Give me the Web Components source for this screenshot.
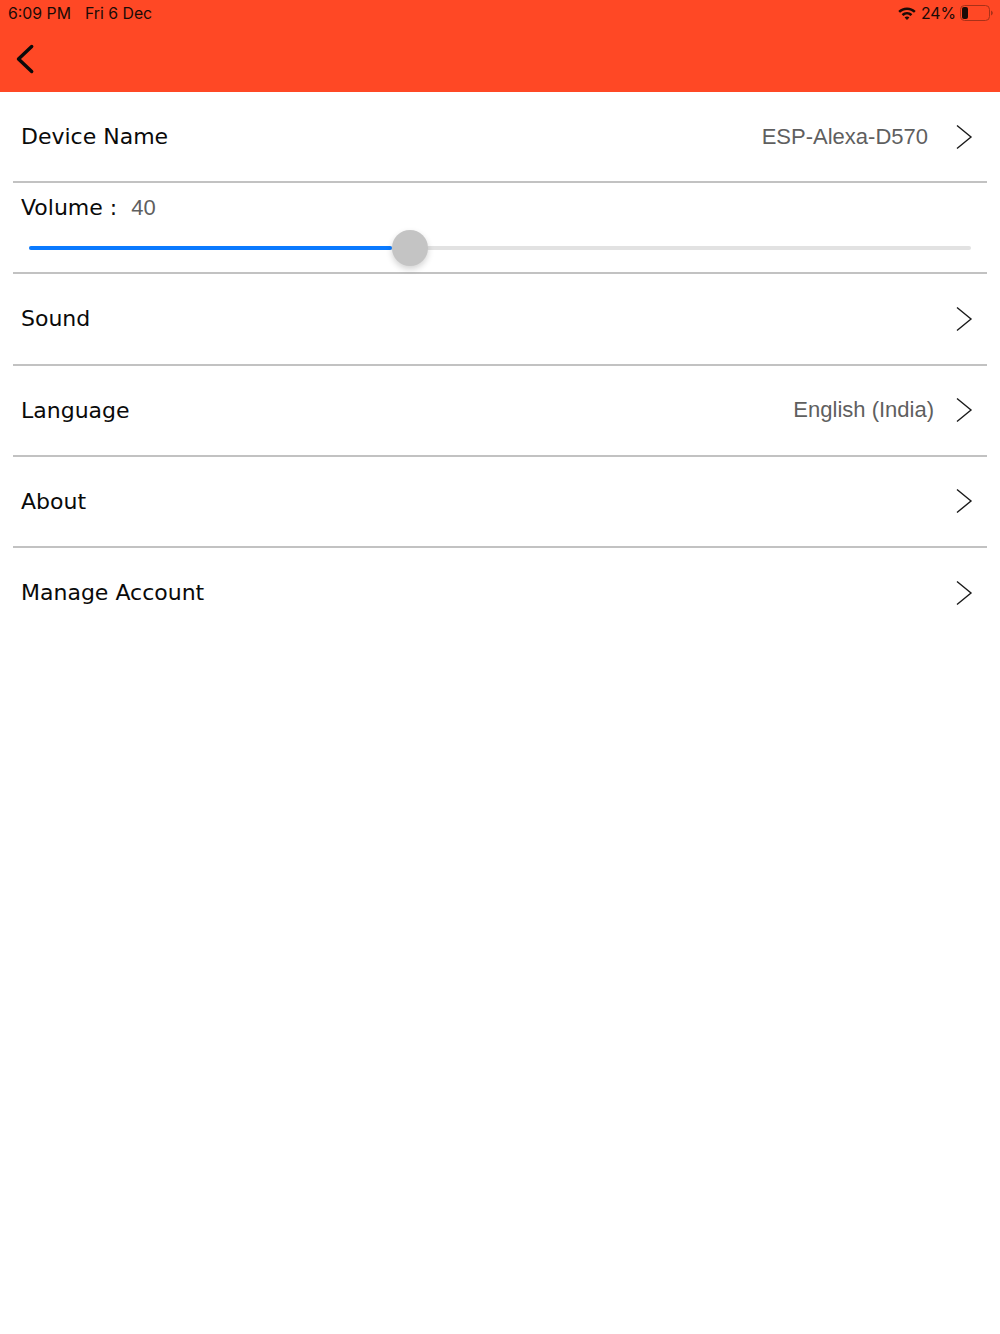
<!DOCTYPE html>
<html>
<head>
<meta charset="utf-8">
<style>
  html, body { margin: 0; padding: 0; background: #fff; }
</style>
</head>
<body>
<app-header></app-header>
<settings-list>
  <settings-row label="Device Name" value="ESP-Alexa-D570" gap="27"></settings-row>
  <volume-row value="40"></volume-row>
  <settings-row label="Sound"></settings-row>
  <settings-row label="Language" value="English (India)" gap="21"></settings-row>
  <settings-row label="About"></settings-row>
  <settings-row label="Manage Account" last></settings-row>
</settings-list>
<script>
(function(){
 class AppHeader extends HTMLElement {
   constructor() {
     super();
     this.attachShadow({mode:'open'});
     this.shadowRoot.innerHTML = `
       <style>
         :host { display: block; height: 92px; background: #ff4825; color: #1a0b07; font-family: "Inter", "Liberation Sans", sans-serif; }
         .status { display: flex; align-items: center; height: 26px; padding: 0 6px 0 8px; font-size: 15.8px; }
         .date { margin-left: 14px; }
         .right { margin-left: auto; display: flex; align-items: center; }
         .pct { margin-left: 5px; }
         .back { display: block; margin: 16px 0 0 14px; }
         svg { display: block; }
       </style>
       <div class="status">
         <span>6:09 PM</span><span class="date">Fri 6 Dec</span>
         <div class="right">
           <svg width="18" height="13" viewBox="0 0 18 13"><path d="M9 0.500C5.600 0.500 2.500 1.800 0.300 4L2 5.800C3.800 4.100 6.300 3 9 3s5.200 1.100 7 2.800L17.700 4C15.500 1.800 12.400 0.500 9 0.500zM9 5C7 5 5.100 5.800 3.700 7.200L5.400 9C6.300 8.100 7.600 7.500 9 7.500s2.700.6 3.600 1.500l1.700-1.800C12.900 5.800 11 5 9 5zM9 9.500c-1 0-1.800.4-2.400 1L9 13l2.400-2.500c-.6-.6-1.400-1-2.400-1z" fill="#1a0b07"/></svg>
           <span class="pct">24%</span>
           <svg style="margin-left:3px" width="35" height="16" viewBox="0 0 35 16"><rect x="1.500" y="0.500" width="29" height="15" rx="4" fill="none" stroke="#a83118" stroke-width="1"/><rect x="3" y="2" width="6" height="12" rx="2" fill="#1a0b07"/><path d="M32 5.500v5c1-.4 1.800-1.400 1.800-2.500S33 5.900 32 5.500z" fill="#a83118"/></svg>
         </div>
       </div>
       <svg class="back" width="24" height="34" viewBox="0 0 24 34"><path d="M17.700 4.500L4.500 17l13.200 12.500" fill="none" stroke="#0a0a0a" stroke-width="3.400" stroke-linecap="round" stroke-linejoin="round"/></svg>
     `;
   }
 }
 class SettingsList extends HTMLElement {
   constructor() {
     super();
     this.attachShadow({mode:'open'});
     this.shadowRoot.innerHTML = `
       <style>:host { display: block; padding: 0 13px; }</style>
       <slot></slot>
     `;
   }
 }
 class SettingsRow extends HTMLElement {
   constructor() {
     super();
     this.attachShadow({mode:'open'});
   }
   connectedCallback() {
     const label = this.getAttribute('label') || '';
     const value = this.getAttribute('value') || '';
     const gap = this.getAttribute('gap') || 20;
     this.shadowRoot.innerHTML = `
       <style>
         :host { display: block; box-sizing: border-box; height: 91.2px; border-bottom: 2px solid #c2c2c2; }
         :host([last]) { border-bottom-color: transparent; }
         .row { display: flex; align-items: center; height: 100%; padding: 0 14px 0 8px; }
         .label { font: 22px "DejaVu Sans", sans-serif; color: #0a0a0a; }
         .value { margin-left: auto; font: 22px "Liberation Sans", Arial, sans-serif; color: #5f5f5f; }
         svg { display: block; flex: none; }
         .value + svg { margin-left: ${gap}px; }
         .label + svg { margin-left: auto; }
       </style>
       <div class="row">
         <span class="label">${label}</span>
         ${value ? `<span class="value">${value}</span>` : ''}
         <svg width="18" height="26" viewBox="0 0 18 26"><path d="M2 1.500L16 13 2 24.500" fill="none" stroke="#1a1a1a" stroke-width="1.400"/></svg>
       </div>
     `;
   }
 }
 class VolumeRow extends HTMLElement {
   constructor() {
     super();
     this.attachShadow({mode:'open'});
   }
   connectedCallback() {
     const value = this.getAttribute('value') || '0';
     this.shadowRoot.innerHTML = `
       <style>
         :host { display: block; box-sizing: border-box; height: 91.2px; border-bottom: 2px solid #c2c2c2; }
         .head { padding: 9px 0 0 8px; height: 31px; display: flex; align-items: center; }
         .label { font: 22px "DejaVu Sans", sans-serif; color: #0a0a0a; }
         .num { margin-left: 14px; font: 22px "Liberation Sans", Arial, sans-serif; color: #5f5f5f; }
         .track { position: relative; margin: 23px 16px 0; height: 4px; border-radius: 2px; background: #e2e2e2; }
         .fill { width: 38.500%; height: 100%; border-radius: 2px; background: #0a7aff; }
         .thumb { position: absolute; left: 363px; top: -16px; width: 36px; height: 36px; border-radius: 50%; background: #c4c4c4; box-shadow: 0 3px 6px rgba(0,0,0,.18); }
       </style>
       <div class="head"><span class="label">Volume :</span><span class="num">${value}</span></div>
       <div class="track"><div class="fill"></div><div class="thumb"></div></div>
     `;
   }
 }
 customElements.define('app-header', AppHeader);
 customElements.define('settings-list', SettingsList);
 customElements.define('settings-row', SettingsRow);
 customElements.define('volume-row', VolumeRow);
})();
</script>
</body>
</html>
